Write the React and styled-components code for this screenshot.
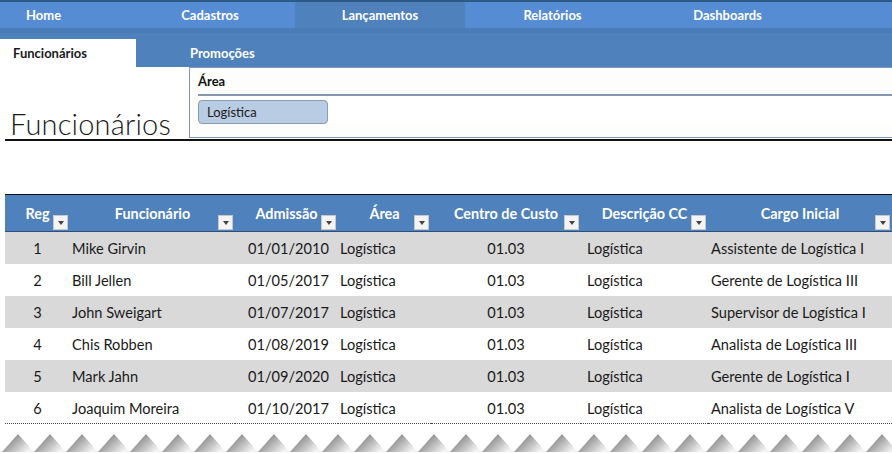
import React from 'react';
import styled, { createGlobalStyle } from 'styled-components';

const GlobalStyle = createGlobalStyle`
  body {
    margin: 0;
    background: #fff;
    font-family: Lato, "Open Sans", sans-serif;
    color: #1a1a1a;
  }
`

const Page = styled.div`
  width: 892px;
  height: 453px;
  overflow: hidden;
  display: flex;
  flex-direction: column;
`

const TopNav = styled.div`
  display: grid;
  grid-template-columns: 125px 170px 170px 175px 175px 1fr;
  height: 26px;
  background: #568cd3;
  border-top: 2px solid #2b5a86;
`

const NavItem = styled.div`
  display: flex;
  align-items: center;
  justify-content: ${p => (p.left ? 'flex-start' : 'center')};
  padding-left: ${p => (p.left ? '26px' : '0')};
  color: #fff;
  font-weight: 700;
  font-size: 13px;
  background: ${p => (p.active ? '#4f81bd' : 'transparent')};
`

const SubNav = styled.div`
  display: flex;
  align-items: flex-end;
  height: 39px;
  background: #4f81bd;
  border-top: 5px solid #4a7cb8;
  box-sizing: border-box;
`

const SubTab = styled.div`
  height: 28px;
  width: ${p => p.w}px;
  display: flex;
  align-items: center;
  padding-left: ${p => p.pad}px;
  box-sizing: border-box;
  font-weight: 700;
  font-size: 13px;
  color: ${p => (p.active ? '#1a1a1a' : '#fff')};
  background: ${p => (p.active ? '#fff' : 'transparent')};
`

const HeaderArea = styled.div`
  display: flex;
  margin-left: 5px;
  border-bottom: 2px solid #111;
  height: 74px;
  box-sizing: border-box;
`

const TitleBlock = styled.div`
  width: 184px;
  display: flex;
  align-items: flex-end;
`

const Title = styled.h1`
  margin: 0 0 0 5px;
  font-family: Lato, sans-serif;
  font-weight: 300;
  font-size: 29px;
  line-height: 31px;
  color: #1a1a1a;
  letter-spacing: 0.2px;
`

const Slicer = styled.div`
  flex: 1;
  height: 71px;
  border: 1px solid #8496b0;
  border-right: none;
  background: #fdfefb;
  box-sizing: border-box;
  padding: 0 0 0 8px;
  display: flex;
  flex-direction: column;
`

const SlicerHead = styled.div`
  height: 26px;
  display: flex;
  align-items: center;
  font-weight: 700;
  font-size: 13px;
  color: #111;
  border-bottom: 2px solid #8496b0;
`

const SlicerBody = styled.div`
  padding-top: 4px;
  background: #fff;
`

const SlicerButton = styled.div`
  width: 130px;
  height: 24px;
  box-sizing: border-box;
  border: 1px solid #8a9bb3;
  border-radius: 4px;
  background: #b8cce4;
  font-size: 13px;
  display: flex;
  align-items: center;
  padding-left: 8px;
  color: #1a1a1a;
`

const Table = styled.table`
  margin: 53px 0 0 5px;
  border-collapse: collapse;
  table-layout: fixed;
  width: 887px;
  font-size: 14.6px;
  border-bottom: 1px dotted #444;
`

const Th = styled.th`
  position: relative;
  height: 36px;
  padding: 0;
  background: #4f81bd;
  color: #fff;
  font-weight: 700;
  font-size: 14.4px;
  text-align: center;
  border-top: 1px solid #111;
  border-bottom: 1px solid #2c4f7c;
`

const FilterBtn = styled.span`
  position: absolute;
  right: 2px;
  bottom: 1px;
  width: 15px;
  height: 15px;
  box-sizing: border-box;
  background: #f4f4f4;
  border: 1px solid #c8c8c8;
  display: flex;
  align-items: center;
  justify-content: center;
  &::after {
    content: '';
    border-left: 3px solid transparent;
    border-right: 3px solid transparent;
    border-top: 4px solid #444;
  }
`

const Tr = styled.tr`
  height: 32px;
  background: ${p => (p.shade ? '#d9d9d9' : '#fff')};
`

const Td = styled.td`
  padding: 2px ${p => p.pr || 0}px 0 ${p => p.pl || 0}px;
  text-align: ${p => p.align || 'left'};
  white-space: nowrap;
  overflow: hidden;
  color: #1a1a1a;
`

const Torn = styled.svg`
  display: block;
  margin-top: 9px;
`

const columns = [
  { title: 'Reg', w: 65 },
  { title: 'Funcionário', w: 165 },
  { title: 'Admissão', w: 103 },
  { title: 'Área', w: 93 },
  { title: 'Centro de Custo', w: 150 },
  { title: 'Descrição CC', w: 127 },
  { title: 'Cargo Inicial', w: 184 },
]

const rows = [
  [1, 'Mike Girvin', '01/01/2010', 'Assistente de Logística I'],
  [2, 'Bill Jellen', '01/05/2017', 'Gerente de Logística III'],
  [3, 'John Sweigart', '01/07/2017', 'Supervisor de Logística I'],
  [4, 'Chis Robben', '01/08/2019', 'Analista de Logística III'],
  [5, 'Mark Jahn', '01/09/2020', 'Gerente de Logística I'],
  [6, 'Joaquim Moreira', '01/10/2017', 'Analista de Logística V'],
]

const nav = ['Home', 'Cadastros', 'Lançamentos', 'Relatórios', 'Dashboards']

function TornEdge() {
  return (
    <Torn width="892" height="19" viewBox="0 0 892 19">
      <defs>
        <linearGradient id="shade" x1="0" y1="0" x2="1" y2="0.6">
          <stop offset="0" stopColor="#5e5e5e" />
          <stop offset="0.5" stopColor="#a8a8a8" />
          <stop offset="1" stopColor="#f2f2f2" />
        </linearGradient>
        <pattern id="zig" width="32" height="19" patternUnits="userSpaceOnUse" x="2">
          <polygon points="0,19 16,1 32,19" fill="url(#shade)" />
        </pattern>
      </defs>
      <rect width="892" height="19" fill="url(#zig)" />
    </Torn>
  )
}

export default function App() {
  return (
    <>
      <GlobalStyle />
      <Page>
        <TopNav>
          {nav.map((n, i) => (
            <NavItem key={n} left={i === 0} active={n === 'Lançamentos'}>{n}</NavItem>
          ))}
        </TopNav>
        <SubNav>
          <SubTab active w={136} pad={13}>Funcionários</SubTab>
          <SubTab w={180} pad={54}>Promoções</SubTab>
        </SubNav>
        <HeaderArea>
          <TitleBlock>
            <Title>Funcionários</Title>
          </TitleBlock>
          <Slicer>
            <SlicerHead>Área</SlicerHead>
            <SlicerBody>
              <SlicerButton>Logística</SlicerButton>
            </SlicerBody>
          </Slicer>
        </HeaderArea>
        <Table>
          <colgroup>
            {columns.map(c => <col key={c.title} style={{ width: c.w }} />)}
          </colgroup>
          <thead>
            <tr>
              {columns.map(c => (
                <Th key={c.title}>
                  {c.title}
                  <FilterBtn />
                </Th>
              ))}
            </tr>
          </thead>
          <tbody>
            {rows.map(([reg, name, date, cargo], i) => (
              <Tr key={reg} shade={i % 2 === 0}>
                <Td align="center">{reg}</Td>
                <Td pl={2}>{name}</Td>
                <Td pl={13}>{date}</Td>
                <Td pl={2}>Logística</Td>
                <Td align="center">01.03</Td>
                <Td pl={6}>Logística</Td>
                <Td pl={3}>{cargo}</Td>
              </Tr>
            ))}
          </tbody>
        </Table>
        <TornEdge />
      </Page>
    </>
  )
}
